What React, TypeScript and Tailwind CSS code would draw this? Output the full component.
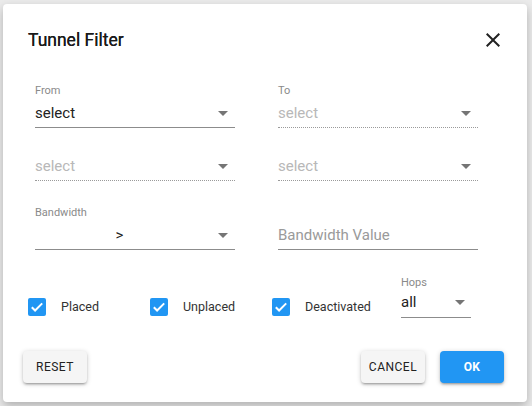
import { FC, ReactNode } from "react";

const font = { fontFamily: "Roboto, 'Liberation Sans', sans-serif" };

const Arrow: FC = () => (
  <svg width="10" height="5" viewBox="0 0 10 5" className="shrink-0">
    <path d="M0 0h10L5 5z" fill="#757575" />
  </svg>
);

// select-like field with label + underline
const Field: FC<{
  label?: string;
  value: string;
  disabled?: boolean;
  center?: boolean;
  arrow?: boolean;
  placeholder?: boolean;
}> = ({ label, value, disabled, center, arrow = true, placeholder }) => (
  <div className="flex flex-col w-[200px]">
    <div className="h-[14px] text-[11px] leading-[14px] text-[#8a8a8a]">{label}</div>
    <div
      className={`h-[30px] flex items-end pb-[4px] border-b ${
        disabled ? "border-dotted border-[#9a9a9a]" : "border-solid border-[#8c8c8c]"
      }`}
    >
      <div
        className={`flex-1 text-[15px] leading-[20px] ${center ? "text-center pr-[14px]" : ""} ${
          disabled ? "text-[#b8b8b8]" : placeholder ? "text-[#9a9a9a]" : "text-[#222]"
        }`}
      >
        {value}
      </div>
      {arrow && (
        <div className="h-[20px] flex items-center pr-[7px]">
          <Arrow />
        </div>
      )}
    </div>
  </div>
);

const Check: FC<{ children: ReactNode }> = ({ children }) => (
  <div className="w-[122px] flex items-center h-[18px]">
    <svg width="18" height="18" viewBox="0 0 18 18" className="shrink-0">
      <rect width="18" height="18" rx="2" fill="#2196f3" />
      <path d="M3.8 9.2l3.3 3.3L14.2 5.4" fill="none" stroke="#fff" strokeWidth="2" />
    </svg>
    <span className="ml-[15px] text-[12.5px] text-[#333]">{children}</span>
  </div>
);

const shadow =
  "shadow-[0_1px_5px_rgba(0,0,0,0.2),0_2px_2px_rgba(0,0,0,0.14),0_3px_1px_-2px_rgba(0,0,0,0.12)]";

export default function App() {
  return (
    <div className="w-[532px] h-[406px] bg-[#ebebeb] overflow-hidden pt-[4px] pl-[3px]" style={font}>
      <div className="w-[524px] h-[398px] bg-white rounded-[4px] shadow-[0_4px_10px_rgba(0,0,0,0.25)] flex flex-col">
        {/* title */}
        <div className="flex items-center justify-between pt-[24px] pl-[25px] pr-[22px]">
          <h2 className="text-[17.5px] leading-[24px] font-normal text-[#1a1a1a] [text-shadow:0_0_0.4px_#1a1a1a]">
            Tunnel Filter
          </h2>
          <svg width="24" height="24" viewBox="0 0 24 24">
            <path
              d="M19 6.41L17.59 5 12 10.59 6.41 5 5 6.41 10.59 12 5 17.59 6.41 19 12 13.41 17.59 19 19 17.59 13.41 12z"
              fill="#222"
            />
          </svg>
        </div>

        {/* fields */}
        <div className="pl-[32px] mt-[32px] flex flex-col">
          <div className="flex gap-[43px]">
            <Field label="From" value="select" />
            <Field label="To" value="select" disabled />
          </div>
          <div className="flex gap-[43px] mt-[9px]">
            <Field value="select" disabled />
            <Field value="select" disabled />
          </div>
          <div className="flex gap-[43px] mt-[25px]">
            <Field label="Bandwidth" value=">" center />
            <Field value="Bandwidth Value" arrow={false} placeholder />
          </div>
        </div>

        {/* checkboxes + hops */}
        <div className="flex items-end pl-[25px] mt-[26px]">
          <div className="flex mb-[2px]">
            <Check>Placed</Check>
            <Check>Unplaced</Check>
            <Check>Deactivated</Check>
          </div>
          <div className="flex flex-col w-[70px] ml-[7px]">
            <div className="h-[14px] text-[11px] leading-[14px] text-[#8a8a8a]">Hops</div>
            <div className="h-[28px] flex items-end pb-[5px] border-b border-[#8c8c8c]">
              <div className="flex-1 text-[15px] leading-[20px] text-[#222]">all</div>
              <div className="h-[20px] flex items-center pr-[6px]">
                <Arrow />
              </div>
            </div>
          </div>
        </div>

        {/* actions */}
        <div className="flex items-center mt-auto mb-[19px] pl-[20px] pr-[23px]">
          <button className={`w-[64px] h-[32px] rounded-[4px] bg-[#f5f5f5] text-[12px] font-normal tracking-[0.5px] text-[#222] ${shadow}`}>
            RESET
          </button>
          <div className="flex-1" />
          <button className={`w-[64px] h-[32px] rounded-[4px] bg-[#f5f5f5] text-[12px] font-normal tracking-[0.5px] text-[#222] ${shadow}`}>
            CANCEL
          </button>
          <button className={`ml-[15px] w-[64px] h-[32px] rounded-[4px] bg-[#2196f3] text-[12px] font-bold tracking-[0.4px] text-white ${shadow}`}>
            OK
          </button>
        </div>
      </div>
    </div>
  );
}
